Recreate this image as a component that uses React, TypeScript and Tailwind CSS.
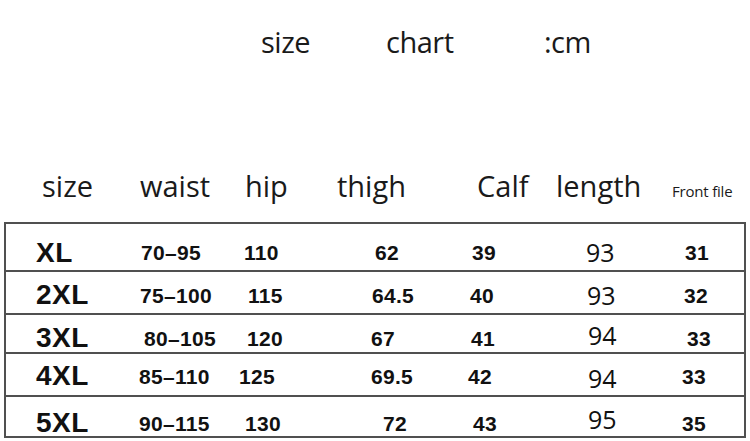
import React from 'react';

type Cell = { text: string; cls?: string };

interface SizeRow {
  size: string;
  rowCls: string;
  cells: Cell[];
}

const rows: SizeRow[] = [
  {
    size: 'XL',
    rowCls: 'h-[48px] pt-[11px]',
    cells: [
      { text: '70–95', cls: 'ml-[1px]' },
      { text: '110' },
      { text: '62', cls: 'ml-[3px]' },
      { text: '39', cls: 'ml-[2px]' },
      { text: '93', cls: 'ml-[0px]' },
      { text: '31', cls: 'ml-[1px]' },
    ],
  },
  {
    size: '2XL',
    rowCls: 'h-[43px] pt-[5px]',
    cells: [
      { text: '75–100' },
      { text: '115', cls: 'ml-[4px]' },
      { text: '64.5' },
      { text: '40' },
      { text: '93', cls: 'ml-[1px]' },
      { text: '32' },
    ],
  },
  {
    size: '3XL',
    rowCls: 'h-[39px] pt-[9px]',
    cells: [
      { text: '80–105', cls: 'ml-[4px]' },
      { text: '120', cls: 'ml-[3px]' },
      { text: '67', cls: 'ml-[-1px]' },
      { text: '41', cls: 'ml-[1px]' },
      { text: '94', cls: 'ml-[2px] mt-[-5px]' },
      { text: '33', cls: 'ml-[3px]' },
    ],
  },
  {
    size: '4XL',
    rowCls: 'h-[43px] pt-[3px]',
    cells: [
      { text: '85–110', cls: 'ml-[-1px]' },
      { text: '125', cls: 'ml-[-5px]' },
      { text: '69.5', cls: 'ml-[-1px]' },
      { text: '42', cls: 'ml-[-2px]' },
      { text: '94', cls: 'ml-[2px] mt-[5px]' },
      { text: '33', cls: 'ml-[-2px]' },
    ],
  },
  {
    size: '5XL',
    rowCls: 'h-[41px] pt-[12px]',
    cells: [
      { text: '90–115', cls: 'ml-[-1px]' },
      { text: '130', cls: 'ml-[1px]' },
      { text: '72', cls: 'ml-[11px]' },
      { text: '43', cls: 'ml-[3px]' },
      { text: '95', cls: 'ml-[2px] mt-[-8px]' },
      { text: '35', cls: 'ml-[-2px]' },
    ],
  },
];

const headFont = "font-['Open_Sans',sans-serif]";
const dataFont = "font-['Liberation_Sans',Arial,sans-serif]";

export default function App() {
  return (
    <div className="w-[750px] h-[441px] bg-white overflow-hidden text-[#1a1a1a]">
      {/* titel */}
      <div className={`${headFont} pt-[22px] pl-[261px] grid grid-cols-[125px_158px_auto] text-[29px] leading-[40px] tracking-[-0.5px]`}>
        <span>size</span>
        <span>chart</span>
        <span>:cm</span>
      </div>

      {/* kolom koppen */}
      <div className={`${headFont} mt-[104px] h-[40px] pl-[42px] grid grid-cols-[98px_105px_92px_140px_79px_116px_1fr] items-baseline text-[29px] leading-[40px]`}>
        <span>size</span>
        <span>waist</span>
        <span>hip</span>
        <span>thigh</span>
        <span>Calf</span>
        <span>length</span>
        <span className="text-[15px] leading-[15px] tracking-[-0.2px]">Front file</span>
      </div>

      {/* tabel */}
      <div className="mt-[16px] ml-[4px] w-[742px] border-t-2 border-x-2 border-[#505050]">
        {rows.map((row) => (
          <div
            key={row.size}
            className={`grid grid-cols-[104px_104px_128px_98px_116px_98px_1fr] items-center pl-[30px] border-b-2 border-[#505050] text-[#111] ${row.rowCls}`}
          >
            <span className={`${dataFont} font-bold text-[28px] leading-none tracking-[0.5px]`}>{row.size}</span>
            {row.cells.map((c, i) => (
              <span
                key={i}
                className={
                  i === 4
                    ? `${headFont} text-[25px] leading-none ${c.cls ?? ''}`
                    : `${dataFont} font-bold text-[21px] leading-none tracking-[0.3px] ${c.cls ?? ''}`
                }
              >
                {c.text}
              </span>
            ))}
          </div>
        ))}
      </div>
    </div>
  );
}
